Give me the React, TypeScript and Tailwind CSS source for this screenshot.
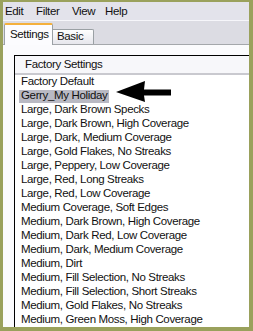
import React from 'react';

const menus = [
  { label: 'Edit', w: 'w-[31px]' },
  { label: 'Filter', w: 'w-[36px]' },
  { label: 'View', w: 'w-[33px]' },
  { label: 'Help', w: 'w-[30px]' },
];

const presets = [
  'Factory Default',
  'Gerry_My Holiday',
  'Large, Dark Brown Specks',
  'Large, Dark Brown, High Coverage',
  'Large, Dark, Medium Coverage',
  'Large, Gold Flakes, No Streaks',
  'Large, Peppery, Low Coverage',
  'Large, Red, Long Streaks',
  'Large, Red, Low Coverage',
  'Medium Coverage, Soft Edges',
  'Medium, Dark Brown, High Coverage',
  'Medium, Dark Red, Low Coverage',
  'Medium, Dark, Medium Coverage',
  'Medium, Dirt',
  'Medium, Fill Selection, No Streaks',
  'Medium, Fill Selection, Short Streaks',
  'Medium, Gold Flakes, No Streaks',
  'Medium, Green Moss, High Coverage',
];

const App = () => {
  return (
    <div className="w-[253px] h-[331px] bg-[#9aa15c] pt-[2px] pl-[3px] pr-[4px] pb-[4px] font-['Liberation_Sans',Arial,sans-serif] text-[11.5px] tracking-[-0.35px] text-[#111]">
      <div className="w-full h-full flex flex-col overflow-hidden">
        {/* Menu bar */}
        <div className="h-[19px] shrink-0 bg-[#e3e3eb] flex items-center pl-[2px] pt-[2px] border-b border-[#f6f6fa]">
          {menus.map((m) => (
            <span key={m.label} className={`${m.w} leading-none`}>
              {m.label}
            </span>
          ))}
        </div>

        {/* Tab strip */}
        <div className="relative h-[24px] shrink-0 bg-[#dcdce3] flex items-end border-b border-[#a4a7ab]">
          <div className="relative z-10 ml-[1px] mb-[-1px] w-[49px] h-[22px] bg-[#fcfcfe] border-x border-[#9aa0a4] border-t-[2px] border-t-[#f4b03c] rounded-t-[2px] flex items-start pl-[5px] pt-[4px]">
            <span className="leading-none">Settings</span>
          </div>
          <div className="w-[41px] h-[15px] bg-gradient-to-b from-[#fefefe] to-[#e6e6ec] border-t border-r border-[#9aa0a4] rounded-tr-[2px] flex items-center pl-[4px]">
            <span className="leading-none">Basic</span>
          </div>
        </div>

        {/* Panel */}
        <div className="flex-1 bg-[#fbfbfd] pt-[10px] pl-[11px] overflow-hidden">
          <div className="w-[260px] h-[300px] border-l border-t border-black bg-white">
            <div className="h-[19px] bg-[#f7f7fa] border-b-2 border-[#c9c9cf] flex items-center pl-[10px]">
              <span className="leading-none">Factory Settings</span>
            </div>
            <div className="relative pl-[4px]">
              {presets.map((p, i) => (
                <div key={p} className="h-[14px] flex items-center">
                  <span
                    className={`h-[13px] flex items-center px-[2px] leading-none ${
                      i === 1 ? 'bg-[#b9b9c3]' : ''
                    }`}
                  >
                    {p}
                  </span>
                </div>
              ))}

              {/* Pointer arrow */}
              <svg
                className="absolute left-[101px] top-[5px]"
                width="58"
                height="24"
                viewBox="0 0 58 24"
              >
                <polygon points="0,12 29,1 28,9.5 55,9.5 55,15.5 28,15.5 29,22" fill="#000" />
              </svg>
            </div>
          </div>
        </div>
      </div>
    </div>
  );
};

export default App;
